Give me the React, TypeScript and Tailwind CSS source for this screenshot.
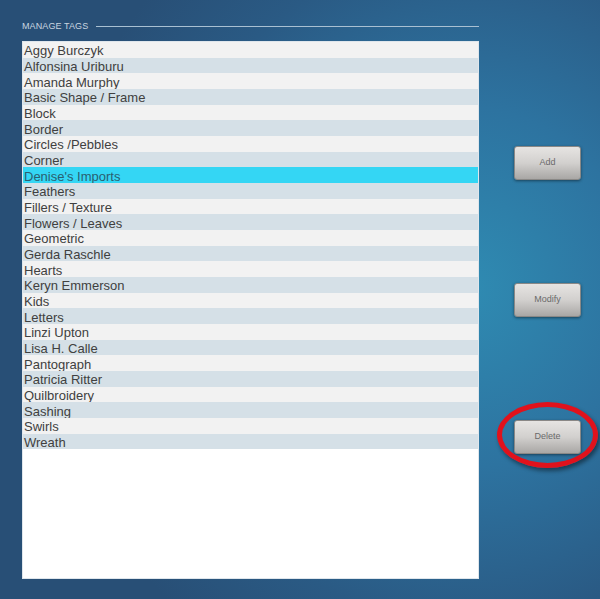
import React from "react";

const tags = [
  "Aggy Burczyk",
  "Alfonsina Uriburu",
  "Amanda Murphy",
  "Basic Shape / Frame",
  "Block",
  "Border",
  "Circles /Pebbles",
  "Corner",
  "Denise's Imports",
  "Feathers",
  "Fillers / Texture",
  "Flowers / Leaves",
  "Geometric",
  "Gerda Raschle",
  "Hearts",
  "Keryn Emmerson",
  "Kids",
  "Letters",
  "Linzi Upton",
  "Lisa H. Calle",
  "Pantograph",
  "Patricia Ritter",
  "Quilbroidery",
  "Sashing",
  "Swirls",
  "Wreath",
];

function Btn({ label }: { label: string }) {
  return (
    <button className="w-[67px] h-[34px] rounded-[3px] border border-[#8a8886] bg-[linear-gradient(to_bottom,#e6e4e2_0%,#d2d0ce_50%,#a9a7a5_100%)] shadow-[0_1px_3px_rgba(0,0,0,0.45)] text-[9px] text-[#6a6a6a] [font-family:'Liberation_Sans',Arial,sans-serif]">
      {label}
    </button>
  );
}

export default function App() {
  return (
    <div className="w-[600px] h-[599px] overflow-hidden bg-[radial-gradient(ellipse_70%_75%_at_78%_48%,#2f8bb2_0%,#2d73a0_40%,#2a5a84_75%,#284f76_100%)] [font-family:'Liberation_Sans',Arial,sans-serif] flex">
      <div className="pl-[22px] pt-[20px] w-[479px] flex flex-col">
        <div className="flex items-center h-[13px] gap-[8px]">
          <span className="text-[9px] text-[#c9d6e0] tracking-[0.1px] whitespace-nowrap">MANAGE TAGS</span>
          <div className="flex-1 h-[1px] bg-[#a9c0d2]" />
        </div>
        <div className="mt-[8px] h-[538px] bg-white border border-[#dfe6ec] flex flex-col">
          {tags.map((t, i) => {
            const sel = t === "Denise's Imports";
            const bg = sel ? "bg-[#34d6f4] text-[#2a5f70]" : i % 2 === 0 ? "bg-[#f2f2f2] text-[#404040]" : "bg-[#d5e0e7] text-[#404040]";
            return (
              <div key={t} className={`h-[15.68px] flex items-center pl-[1px] pt-[2px] text-[13px] leading-none whitespace-nowrap ${bg}`}>
                {t}
              </div>
            );
          })}
        </div>
      </div>
      <div className="ml-[35px] pt-[146px] flex flex-col gap-[103px]">
        <Btn label="Add" />
        <Btn label="Modify" />
        <div className="relative">
          <Btn label="Delete" />
          <div className="absolute left-[-17px] top-[-18px] w-[101px] h-[66px] rounded-[50%] border-[5px] border-[#e0121c] shadow-[2px_3px_4px_rgba(0,0,0,0.45)] pointer-events-none" />
        </div>
      </div>
    </div>
  );
}
